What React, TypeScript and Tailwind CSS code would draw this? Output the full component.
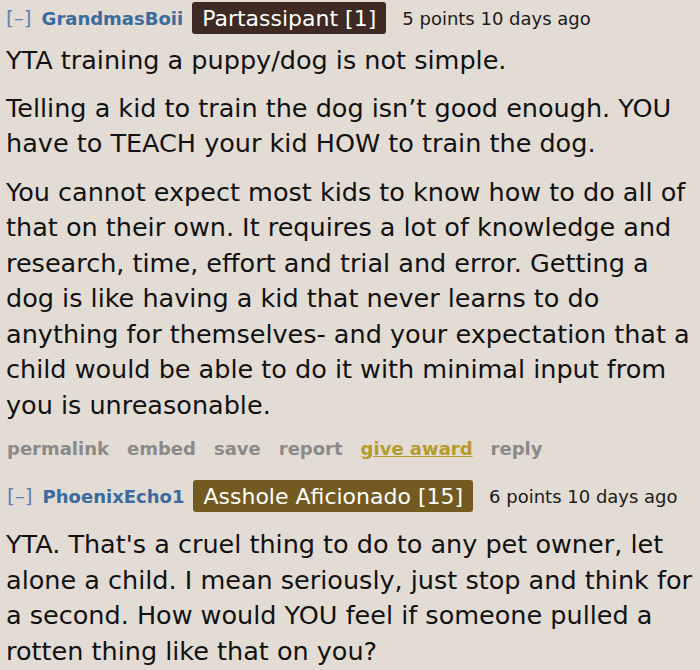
import React from 'react';

const font = { fontFamily: '"DejaVu Sans", Verdana, sans-serif' };

function Header({ user, flair, flairBg, meta }: { user: string; flair: string; flairBg: string; meta: string }) {
  return (
    <div className="flex items-center h-[34px]">
      <span className="text-[#5f82ad] text-[20px]">[–]</span>
      <span className="ml-[10px] text-[#3a6a9e] text-[18px] font-bold">{user}</span>
      <span className={`ml-[9px] ${flairBg} text-white text-[22px] px-[10px] h-[32px] flex items-center rounded-[3px]`}>{flair}</span>
      <span className="ml-[16px] text-[#1a1a1a] text-[18px]">{meta}</span>
    </div>
  );
}

export default function App() {
  return (
    <div className="w-[700px] h-[670px] bg-[#e3dcd4] pl-[6px] pr-[4px] pt-[1px] text-[#111] overflow-hidden" style={font}>
      <Header user="GrandmasBoii" flair="Partassipant [1]" flairBg="bg-[#3e2a22]" meta="5 points 10 days ago" />
      <div className="text-[25.5px] leading-[35.5px] mt-[8px]">
        <p>YTA training a puppy/dog is not simple.</p>
        <p className="mt-[12px]">Telling a kid to train the dog isn’t good enough. YOU have to TEACH your kid HOW to train the dog.</p>
        <p className="mt-[13px]">You cannot expect most kids to know how to do all of that on their own. It requires a lot of knowledge and research, time, effort and trial and error. Getting a dog is like having a kid that never learns to do anything for themselves- and your expectation that a child would be able to do it with minimal input from you is unreasonable.</p>
      </div>
      <div className="flex gap-[18px] text-[18px] leading-[27px] font-bold text-[#8a8a8a] mt-[12px] pl-[1px]">
        <span>permalink</span>
        <span>embed</span>
        <span>save</span>
        <span>report</span>
        <span className="text-[#b59b2c] underline">give award</span>
        <span>reply</span>
      </div>
      <div className="mt-[17px] pl-[1px]">
        <Header user="PhoenixEcho1" flair="Asshole Aficionado [15]" flairBg="bg-[#735a20]" meta="6 points 10 days ago" />
      </div>
      <div className="text-[25.5px] leading-[35.5px] mt-[14px]">
        <p>YTA. That's a cruel thing to do to any pet owner, let alone a child. I mean seriously, just stop and think for a second. How would YOU feel if someone pulled a rotten thing like that on you?</p>
      </div>
    </div>
  );
}
